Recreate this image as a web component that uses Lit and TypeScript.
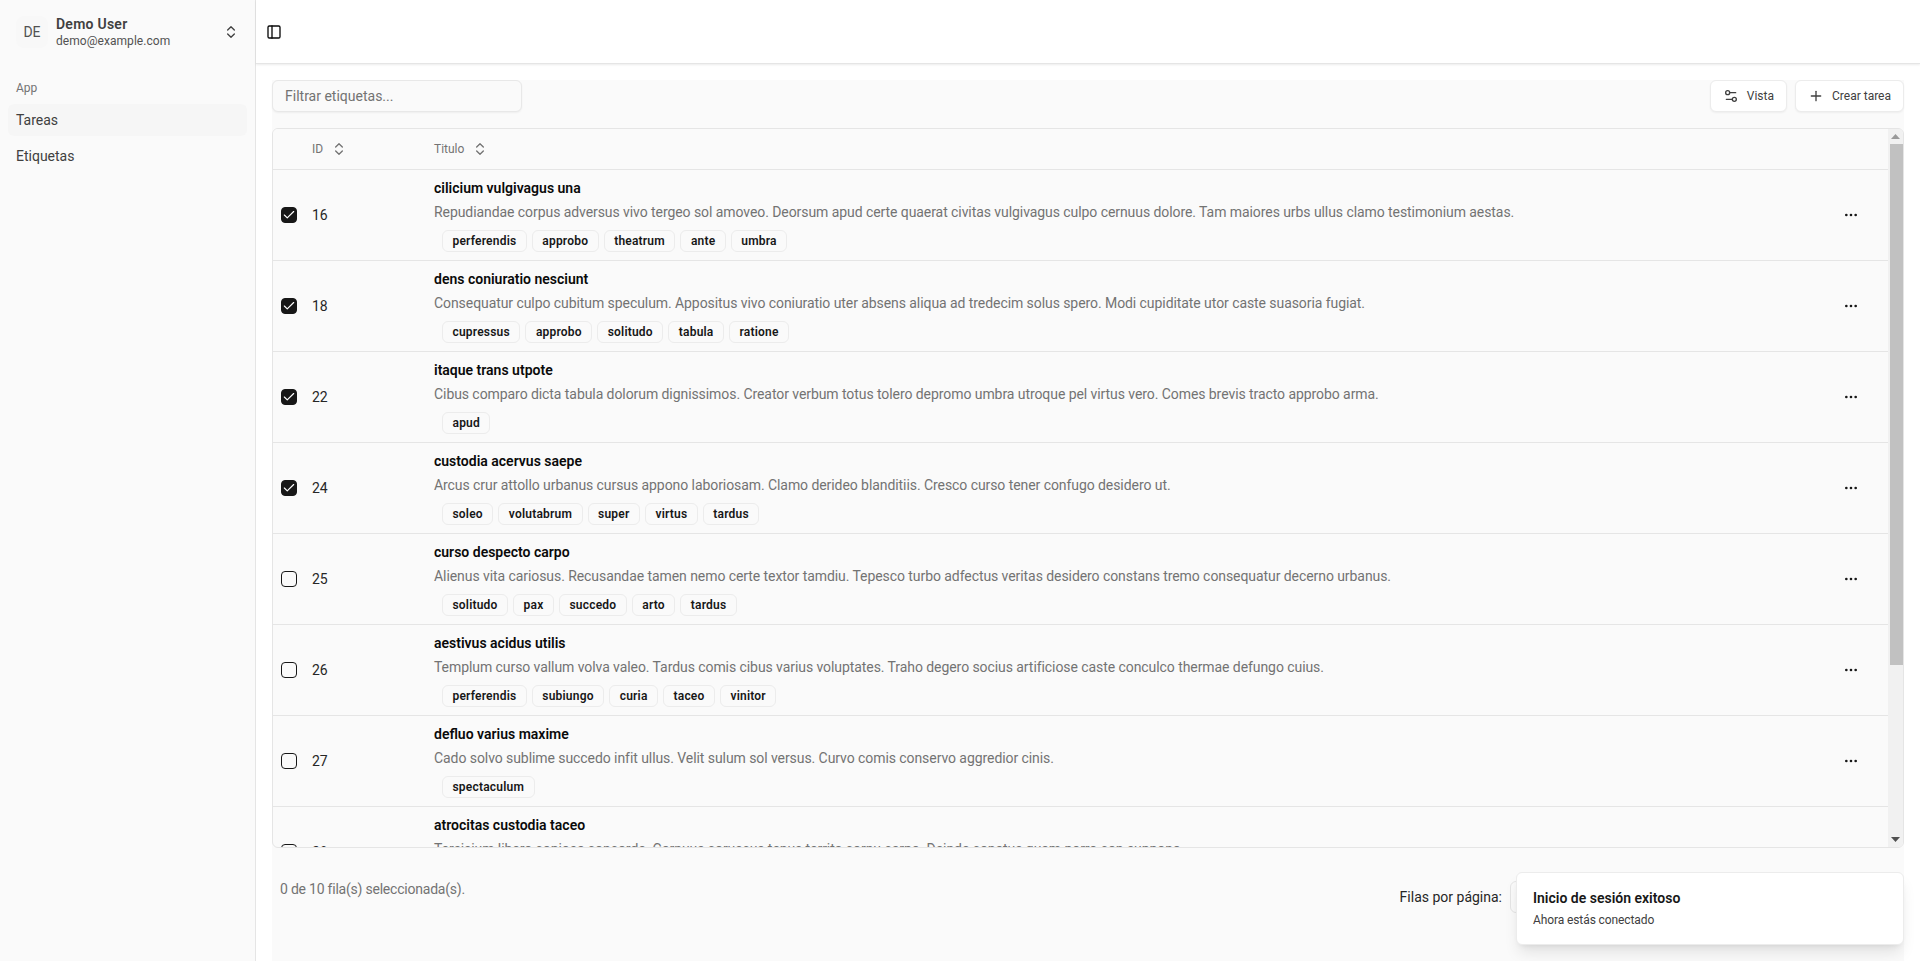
import { LitElement, html, css, svg } from "lit";
import { customElement } from "lit/decorators.js";

type Row = { id: number; checked: boolean; title: string; desc: string; tags: string[] };
const rows: Row[] = [
  { id: 16, checked: true, title: "cilicium vulgivagus una", desc: "Repudiandae corpus adversus vivo tergeo sol amoveo. Deorsum apud certe quaerat civitas vulgivagus culpo cernuus dolore. Tam maiores urbs ullus clamo testimonium aestas.", tags: ["perferendis", "approbo", "theatrum", "ante", "umbra"] },
  { id: 18, checked: true, title: "dens coniuratio nesciunt", desc: "Consequatur culpo cubitum speculum. Appositus vivo coniuratio uter absens aliqua ad tredecim solus spero. Modi cupiditate utor caste suasoria fugiat.", tags: ["cupressus", "approbo", "solitudo", "tabula", "ratione"] },
  { id: 22, checked: true, title: "itaque trans utpote", desc: "Cibus comparo dicta tabula dolorum dignissimos. Creator verbum totus tolero depromo umbra utroque pel virtus vero. Comes brevis tracto approbo arma.", tags: ["apud"] },
  { id: 24, checked: true, title: "custodia acervus saepe", desc: "Arcus crur attollo urbanus cursus appono laboriosam. Clamo derideo blanditiis. Cresco curso tener confugo desidero ut.", tags: ["soleo", "volutabrum", "super", "virtus", "tardus"] },
  { id: 25, checked: false, title: "curso despecto carpo", desc: "Alienus vita cariosus. Recusandae tamen nemo certe textor tamdiu. Tepesco turbo adfectus veritas desidero constans tremo consequatur decerno urbanus.", tags: ["solitudo", "pax", "succedo", "arto", "tardus"] },
  { id: 26, checked: false, title: "aestivus acidus utilis", desc: "Templum curso vallum volva valeo. Tardus comis cibus varius voluptates. Traho degero socius artificiose caste conculco thermae defungo cuius.", tags: ["perferendis", "subiungo", "curia", "taceo", "vinitor"] },
  { id: 27, checked: false, title: "defluo varius maxime", desc: "Cado solvo sublime succedo infit ullus. Velit sulum sol versus. Curvo comis conservo aggredior cinis.", tags: ["spectaculum"] },
  { id: 28, checked: false, title: "atrocitas custodia taceo", desc: "Tersisium libero copiosa concorde. Cornuus coruscus tenus territo cornu carpo. Deinde conatus quam porro con suppono.", tags: ["curia"] },
];

const updown = (size = 16) => svg`<svg class="ud" width=${size} height=${size} viewBox="0 0 24 24" fill="none" stroke="currentColor" stroke-width="2" stroke-linecap="round" stroke-linejoin="round"><path d="m7 15 5 5 5-5"/><path d="m7 9 5-5 5 5"/></svg>`;

@customElement("app-root")
export class AppRoot extends LitElement {
  static styles = css`
    :host { display: flex; width: 100%; height: 100vh; overflow: hidden; font-family: Roboto, "Noto Sans", sans-serif; color: #0a0a0a; background: #fff; position: relative; font-size: 14px; }
    * { box-sizing: border-box; }
    .side { width: 256px; flex: none; background: #fafafa; border-right: 1px solid #e5e5e5; padding: 8px; display: flex; flex-direction: column; }
    .user { height: 48px; display: flex; align-items: center; padding: 8px; gap: 8px; margin-bottom: 8px; color: #3f3f3f; }
    .avatar { width: 32px; height: 32px; border-radius: 8px; background: #f8f8f8; display: flex; align-items: center; justify-content: center; font-size: 14px; color: #525252; flex: none; }
    .uinfo { flex: 1; display: flex; flex-direction: column; min-width: 0; }
    .uname { font-weight: 600; font-size: 14px; line-height: 18px; color: #404040; letter-spacing: .25px; }
    .umail { font-size: 12px; line-height: 16px; color: #525252; letter-spacing: .05px; }
    .user .ud { color: #404040; }
    .group { padding: 8px 0; }
    .glabel { height: 32px; padding: 0 8px; font-size: 12px; color: #737373; display: flex; align-items: center; }
    .nav { height: 32px; padding: 0 8px; border-radius: 6px; display: flex; align-items: center; font-size: 14px; color: #404040; margin-bottom: 4px; }
    .nav.on { background: #f6f6f6; }
    .main { flex: 1; min-width: 0; display: flex; flex-direction: column; }
    .top { height: 64px; flex: none; border-bottom: 1px solid #e5e5e5; box-shadow: 0 1px 2px rgba(0,0,0,.08); display: flex; align-items: center; padding: 0 16px 0 10px; background: #fff; }
    .content { flex: 1; min-height: 0; margin: 16px 16px 0; background: #fafafa; display: flex; flex-direction: column; }
    .toolbar { display: flex; align-items: center; justify-content: space-between; height: 32px; margin-bottom: 16px; flex: none; }
    .filter { width: 250px; height: 32px; border: 1px solid #e8e8e8; border-radius: 6px; padding: 0 12px; font-size: 14px; color: #737373; display: flex; align-items: center; box-shadow: 0 1px 2px rgba(0,0,0,.05); background: #fafafa; }
    .tools { display: flex; gap: 8px; }
    .btn { height: 32px; padding: 0 12px; border: 1px solid #ececec; border-radius: 6px; background: #fff; display: flex; align-items: center; gap: 8px; font-size: 12px; color: #404040; box-shadow: 0 1px 2px rgba(0,0,0,.05); }
    .tablewrap { height: 720px; flex: none; border: 1px solid #e5e5e5; border-radius: 6px; overflow: hidden; display: flex; }
    .scroller { flex: 1; min-width: 0; overflow: hidden; }
    .sbar { width: 15px; flex: none; background: #f1f1f1; display: flex; flex-direction: column; align-items: flex-end; }
    .arrow { width: 15px; height: 15px; flex: none; display: flex; align-items: center; justify-content: center; }
    .thumb { width: 13px; height: 521px; flex: none; background: #c1c1c1; }
    .spacer { flex: 1; }
    table { width: 100%; border-collapse: separate; border-spacing: 0; table-layout: fixed; }
    th { height: 41px; text-align: left; font-weight: 400; font-size: 12px; color: #737373; border-bottom: 1px solid #e5e5e5; background: #fafafa; padding: 0; }
    .thc { display: flex; align-items: center; gap: 8px; }
    td { border-bottom: 1px solid #e5e5e5; padding: 0; vertical-align: middle; height: 91px; }
    .c0 { width: 39px; padding-left: 8px; }
    .c1 { width: 122px; }
    .c3 { width: 45px; }
    .cb { width: 16px; height: 16px; border-radius: 4px; border: 1px solid #171717; display: flex; align-items: center; justify-content: center; background: #fafafa; }
    .cb.on { background: #171717; color: #fff; }
    .idv { font-size: 14px; color: #262626; letter-spacing: -.2px; }
    .tcell { padding-bottom: 1px; }
    .title { font-weight: 600; font-size: 14px; line-height: 20px; color: #0a0a0a; }
    .desc { font-size: 14px; line-height: 20px; margin-top: 4px; color: #737373; white-space: nowrap; letter-spacing: -.07px; }
    .tags { display: flex; gap: 5px; margin: 8px 0 0 8px; }
    .tag { height: 22px; padding: 0 9.5px; border: 1px solid #ececec; border-radius: 6px; font-size: 12px; font-weight: 600; display: flex; align-items: center; color: #171717; letter-spacing: .2px; }
    .more { display: flex; justify-content: flex-start; }
    .foot { display: flex; flex: 1; justify-content: space-between; padding: 31px 8px 0; }
    .count { font-size: 14px; color: #737373; line-height: 20px; letter-spacing: -.22px; }
    .pp { font-size: 14px; color: #262626; display: flex; gap: 8px; height: 32px; align-items: center; margin-right: 316px; margin-top: 2px; }
    .sel { width: 70px; height: 32px; border: 1px solid #e5e5e5; border-radius: 6px; }
    .toast { position: absolute; left: 1516px; top: 872px; width: 388px; height: 73px; background: #fff; border: 1px solid #ececec; border-radius: 6px; box-shadow: 0 10px 15px -3px rgba(0,0,0,.1), 0 4px 6px -4px rgba(0,0,0,.1); padding: 15px 16px; display: flex; flex-direction: column; }
    .t1 { font-size: 14px; font-weight: 600; line-height: 20px; color: #171717; }
    .t2 { font-size: 12px; line-height: 16px; margin-top: 4px; color: #404040; letter-spacing: -.1px; }
  `;

  render() {
    return html`
      <aside class="side">
        <div class="user">
          <div class="avatar">DE</div>
          <div class="uinfo"><span class="uname">Demo User</span><span class="umail">demo@example.com</span></div>
          ${updown(16)}
        </div>
        <div class="group">
          <div class="glabel">App</div>
          <div class="nav on">Tareas</div>
          <div class="nav">Etiquetas</div>
        </div>
      </aside>
      <div class="main">
        <header class="top">
          <svg width="16" height="16" viewBox="0 0 24 24" fill="none" stroke="#0a0a0a" stroke-width="2" stroke-linecap="round" stroke-linejoin="round"><rect width="18" height="18" x="3" y="3" rx="2"/><path d="M9 3v18"/></svg>
        </header>
        <section class="content">
          <div class="toolbar">
            <div class="filter">Filtrar etiquetas...</div>
            <div class="tools">
              <div class="btn"><svg width="16" height="16" viewBox="0 0 24 24" fill="none" stroke="currentColor" stroke-width="2" stroke-linecap="round" stroke-linejoin="round"><path d="M14 17H5"/><path d="M19 7h-9"/><circle cx="17" cy="17" r="3"/><circle cx="7" cy="7" r="3"/></svg><span>Vista</span></div>
              <div class="btn"><svg width="16" height="16" viewBox="0 0 24 24" fill="none" stroke="currentColor" stroke-width="2" stroke-linecap="round" stroke-linejoin="round"><path d="M5 12h14"/><path d="M12 5v14"/></svg><span>Crear tarea</span></div>
            </div>
          </div>
          <div class="tablewrap">
            <div class="scroller">
              <table>
                <thead><tr>
                  <th class="c0"></th>
                  <th class="c1"><div class="thc">ID ${updown(16)}</div></th>
                  <th><div class="thc">Titulo ${updown(16)}</div></th>
                  <th class="c3"></th>
                </tr></thead>
                <tbody>
                  ${rows.map((r) => html`<tr>
                    <td class="c0"><div class="cb ${r.checked ? "on" : ""}">${r.checked ? html`<svg width="14" height="14" viewBox="0 0 24 24" fill="none" stroke="currentColor" stroke-width="2" stroke-linecap="round" stroke-linejoin="round"><path d="M20 6 9 17l-5-5"/></svg>` : ""}</div></td>
                    <td class="c1"><span class="idv">${r.id}</span></td>
                    <td class="tcell">
                      <div class="title">${r.title}</div>
                      <div class="desc">${r.desc}</div>
                      <div class="tags">${r.tags.map((t) => html`<span class="tag">${t}</span>`)}</div>
                    </td>
                    <td class="c3"><div class="more"><svg width="16" height="16" viewBox="0 0 24 24" fill="none" stroke="#171717" stroke-width="2" stroke-linecap="round" stroke-linejoin="round"><circle cx="12" cy="12" r="1"/><circle cx="19" cy="12" r="1"/><circle cx="5" cy="12" r="1"/></svg></div></td>
                  </tr>`)}
                </tbody>
              </table>
            </div>
            <div class="sbar">
              <div class="arrow"><svg width="9" height="5" viewBox="0 0 9 5"><path d="M4.5 0 9 5H0z" fill="#9a9a9a"/></svg></div>
              <div class="thumb"></div>
              <div class="spacer"></div>
              <div class="arrow"><svg width="9" height="5" viewBox="0 0 9 5"><path d="M0 0h9L4.500 5z" fill="#505050"/></svg></div>
            </div>
          </div>
          <div class="foot">
            <div class="count">0 de 10 fila(s) seleccionada(s).</div>
            <div class="pp"><span>Filas por página:</span><div class="sel"></div></div>
          </div>
        </section>
      </div>
      <div class="toast"><div class="t1">Inicio de sesión exitoso</div><div class="t2">Ahora estás conectado</div></div>
    `;
  }
}
